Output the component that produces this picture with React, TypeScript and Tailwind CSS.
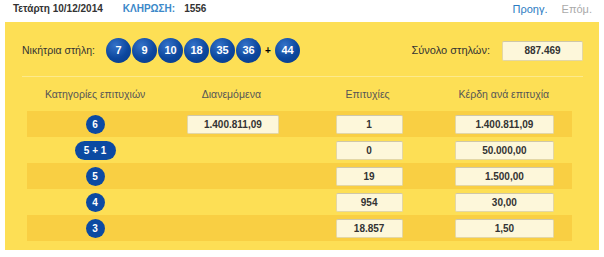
const balls = ['7', '9', '10', '18', '35', '36']

const rows = [
  { cat: '6', dist: '1.400.811,09', wins: '1', prize: '1.400.811,09' },
  { cat: '5 + 1', dist: '', wins: '0', prize: '50.000,00' },
  { cat: '5', dist: '', wins: '19', prize: '1.500,00' },
  { cat: '4', dist: '', wins: '954', prize: '30,00' },
  { cat: '3', dist: '', wins: '18.857', prize: '1,50' },
]

function Ball({ n }: { n: string }) {
  return (
    <div className="flex h-[25px] w-[25px] items-center justify-center rounded-full bg-[radial-gradient(circle_at_38%_30%,#3473c9,#0c479e_55%,#083a85)] text-[11px] font-bold text-white">
      {n}
    </div>
  )
}

function Box({ value, width }: { value: string; width: string }) {
  return (
    <div
      className={`flex h-[19px] items-center justify-center rounded-[2px] border border-[#e3d7a6] border-t-[#cfc7a8] bg-[#fdf7da] text-[10px] font-bold text-[#333] ${width}`}
    >
      {value}
    </div>
  )
}

export default function App() {
  return (
    <div className="h-[257px] w-[604px] bg-white font-['Liberation_Sans',Arial,sans-serif] text-[10.5px]">
      <div className="flex h-[22px] items-start justify-between pl-[13px] pr-[12px] pt-px text-[10px]">
        <div className="flex items-center font-bold text-[#333]">
          <span>Τετάρτη 10/12/2014</span>
          <span className="ml-[20px] text-[#3b88c9]">ΚΛΗΡΩΣΗ:</span>
          <span className="ml-[9px]">1556</span>
        </div>
        <div className="flex items-center text-[11px]">
          <span className="text-[#2a7bc2]">Προηγ.</span>
          <span className="ml-[14px] text-[#aaa]">Επόμ.</span>
        </div>
      </div>

      <div className="ml-[5px] h-[228px] w-[594px] bg-[#fddf55] pl-[17px] pr-[16px] pt-[16px]">
        <div className="flex h-[25px] items-center justify-between">
          <div className="flex items-center">
            <span className="w-[84px] text-[#333]">Νικήτρια στήλη:</span>
            <div className="flex gap-px">
              {balls.map((b) => (
                <Ball key={b} n={b} />
              ))}
            </div>
            <span className="w-[14px] text-center text-[10px] font-bold text-black">+</span>
            <Ball n="44" />
          </div>
          <div className="flex items-center">
            <span className="mr-[12px] text-[11px] text-[#333]">Σύνολο στηλών:</span>
            <div className="flex h-[20px] w-[81px] items-center justify-center rounded-[2px] border border-[#e3d7a6] border-t-[#cfc7a8] bg-[#fdf7da] text-[10px] font-bold text-[#333]">
              887.469
            </div>
          </div>
        </div>

        <div className="mt-[13px] h-px bg-[#fdea8c]" />

        <div className="ml-[5px] w-[545px]">
          <div className="grid h-[34px] grid-cols-4 items-center pt-px text-center text-[#555]">
            <span>Κατηγορίες επιτυχιών</span>
            <span>Διανεμόμενα</span>
            <span>Επιτυχίες</span>
            <span>Κέρδη ανά επιτυχία</span>
          </div>
          {rows.map((r, i) => (
            <div
              key={r.cat}
              className={`grid h-[26px] grid-cols-4 items-center ${i % 2 === 0 ? 'bg-[#f9cf43]' : ''}`}
            >
              <div className="flex justify-center">
                <div
                  className={`flex h-[19px] items-center justify-center rounded-full bg-[#0c4aa2] text-[10px] font-bold text-white ${r.cat.length > 1 ? 'w-[41px]' : 'w-[19px]'}`}
                >
                  {r.cat}
                </div>
              </div>
              <div className="flex justify-center pl-[3px]">
                {r.dist && <Box value={r.dist} width="w-[92px]" />}
              </div>
              <div className="flex justify-center pl-[3px]">
                <Box value={r.wins} width="w-[67px]" />
              </div>
              <div className="flex justify-center pl-px">
                <Box value={r.prize} width="w-[99px]" />
              </div>
            </div>
          ))}
        </div>
      </div>
    </div>
  )
}
